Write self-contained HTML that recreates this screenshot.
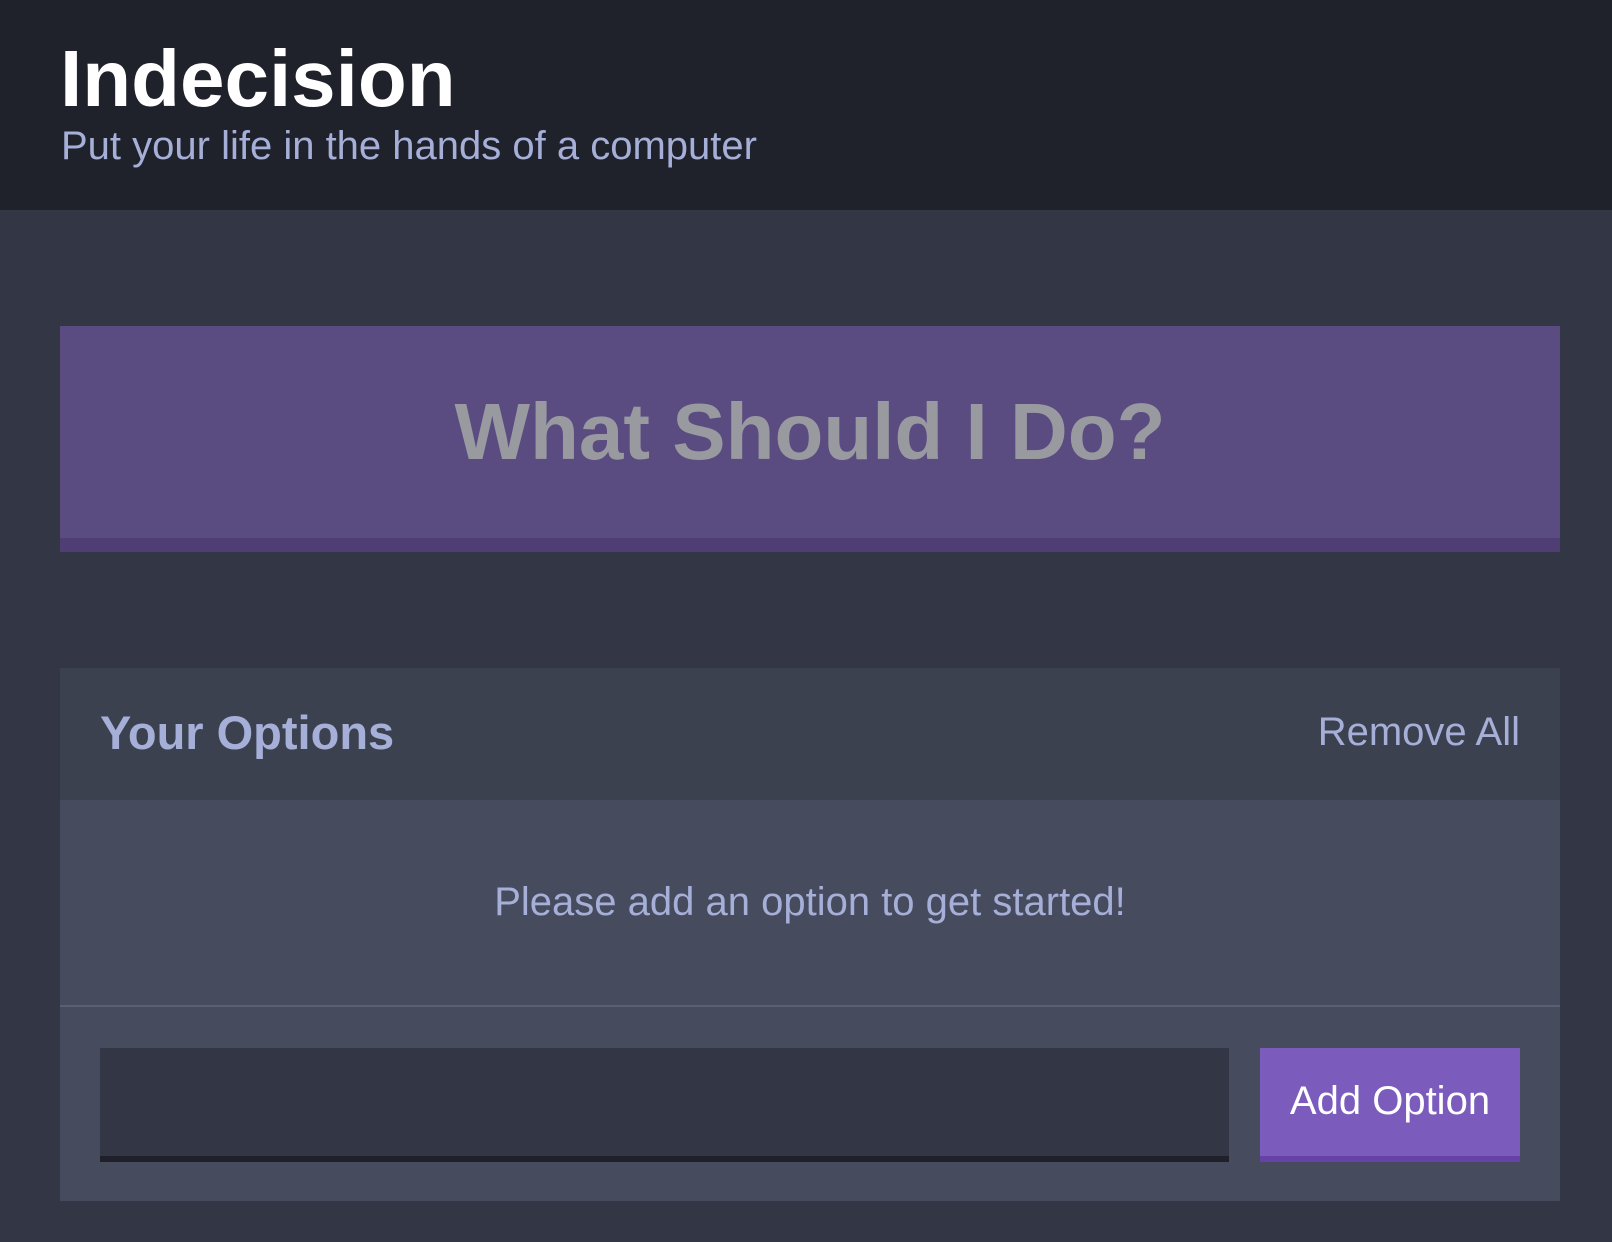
<!DOCTYPE html>
<html><head><meta charset="utf-8"><style>
*{margin:0;padding:0;box-sizing:border-box}
body{width:1612px;height:1242px;background:#333745;font-family:"Liberation Sans",Arial,sans-serif;overflow:hidden;position:relative}
.hdr{position:absolute;left:0;top:0;width:1612px;height:210px;background:#20222b}
.t1{position:absolute;left:60px;top:39px;font-size:80px;font-weight:bold;color:#fff;line-height:1}
.t2{position:absolute;left:61px;top:126px;font-size:40px;color:#a5afd7;line-height:1}
.big{position:absolute;left:60px;top:326px;width:1500px;height:226px;background:#5a4b81;border-bottom:14px solid #4f3e74;color:#999aa0;font-weight:bold;font-size:80px;text-align:center;line-height:212px}
.panel{position:absolute;left:60px;top:668px;width:1500px;height:533px;background:#464b5e}
.ph{position:absolute;left:0;top:0;width:1500px;height:132px;background:#3c4150}
.yo{position:absolute;left:40px;top:41px;font-size:47px;font-weight:bold;color:#a5afd7;line-height:1}
.ra{position:absolute;right:40px;top:44px;font-size:40px;color:#a5afd7;line-height:1}
.msg{position:absolute;left:0;width:1500px;top:214px;text-align:center;font-size:40px;color:#a5afd7;line-height:1}
.div{position:absolute;left:0;top:337px;width:1500px;height:2px;background:#5b5f74}
.inp{position:absolute;left:40px;top:380px;width:1129px;height:114px;background:#333745;border-bottom:6px solid #1f2029}
.btn{position:absolute;left:1200px;top:380px;width:260px;height:114px;background:#7b5cbc;border-bottom:6px solid #6742a6;color:#fff;font-size:40px;text-align:center;line-height:106px}
</style></head><body>
<div class="hdr"><div class="t1">Indecision</div><div class="t2">Put your life in the hands of a computer</div></div>
<div class="big">What Should I Do?</div>
<div class="panel">
<div class="ph"><div class="yo">Your Options</div><div class="ra">Remove All</div></div>
<div class="msg">Please add an option to get started!</div>
<div class="div"></div>
<div class="inp"></div>
<div class="btn">Add Option</div>
</div>
</body></html>
